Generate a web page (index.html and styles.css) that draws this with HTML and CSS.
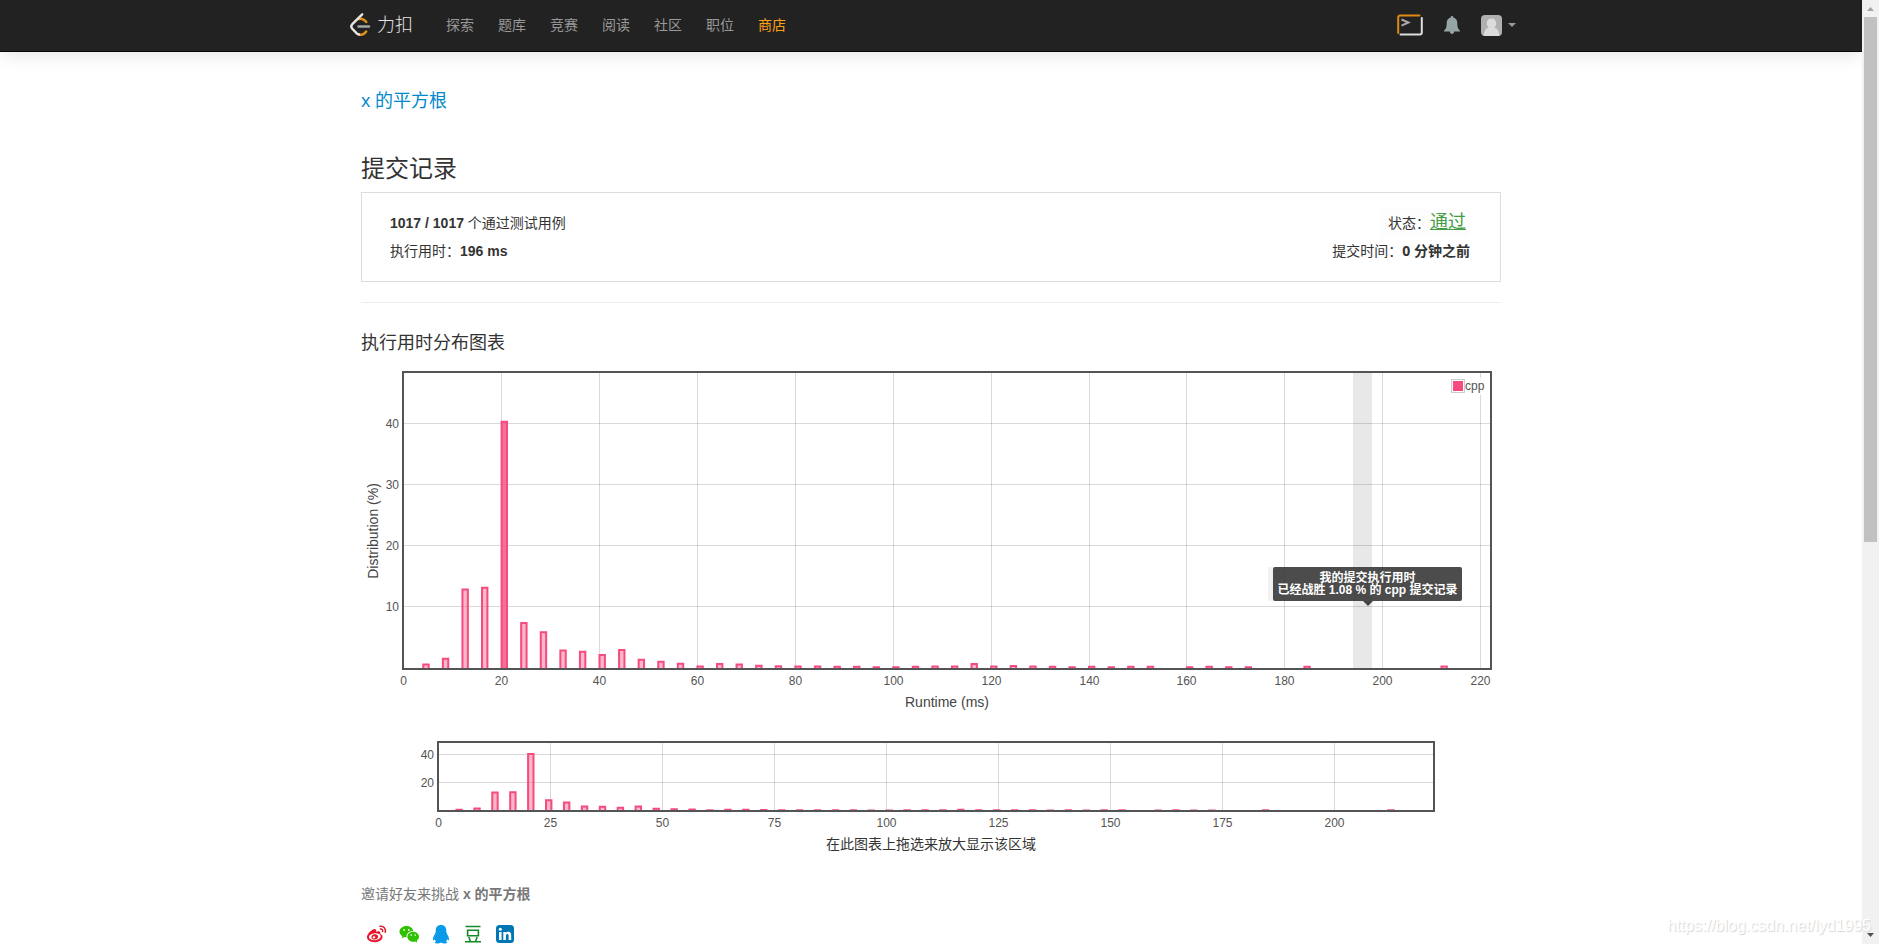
FILE: index.html
```html
<!DOCTYPE html>
<html lang="zh-CN">
<head>
<meta charset="utf-8">
<title>提交记录 - 力扣</title>
<link rel="stylesheet" href="styles.css">
</head>
<body>
<div class="page">
  <header class="navbar">
    <div class="container navbar-inner">
      <a class="brand" href="#">
        <svg width="21" height="24" viewBox="0 0 21 24" fill="none" stroke-width="2.4" stroke-linecap="round" stroke-linejoin="round" aria-hidden="true">
          <path d="M9 6c2.500-.8 5 .3 7.300 3M16.200 18.500c-1.500 2-4.500 4-7.200 2.800" stroke="#e08f18"/>
          <path d="M12.200 1.300 2.300 11.200c-1.300 1.500-1.300 3.200 0 4.600L7 20.700c.6.500 1.200.7 2 .8" stroke="#e9e5df"/>
          <path d="M8.500 13.500h10.500" stroke="#a5a5a5"/>
        </svg>
        <span>力扣</span>
      </a>
      <nav class="menu">
        <a href="#">探索</a><a href="#">题库</a><a href="#">竞赛</a><a href="#">阅读</a><a href="#">社区</a><a href="#">职位</a><a class="store" href="#">商店</a>
      </nav>
      <div class="tools">
        <button type="button" aria-label="Playground">
          <svg width="26" height="22" viewBox="0 0 26 22" fill="none" stroke-width="2" stroke-linecap="round">
            <path d="M1.200 19V3.500q0-2 2-2H22.500" stroke="#de8a12"/>
            <path d="M24.800 4v14.500q0 2-2 2H3.500" stroke="#dedede"/>
            <path d="M4.500 5.500l7 3-7 3.200" stroke="#a8a8a8" stroke-linecap="butt"/>
          </svg>
        </button>
        <button type="button" aria-label="通知">
          <svg width="16" height="20" viewBox="0 0 16 20" fill="#95a5a6">
            <path d="M8 1c.9 0 1.300.6 1.300 1.400 2.600.7 4 2.700 4 5.600 0 4.500.9 6.200 2.700 7.700v.8H10.300C10 17.900 9.200 19 8 19s-2-1.100-2.300-2.500H0v-.8C1.800 14.200 2.700 12.500 2.700 8c0-2.900 1.400-4.900 4-5.600C6.700 1.600 7.100 1 8 1z"/>
          </svg>
        </button>
        <button type="button" class="account" aria-label="账户">
          <svg width="21" height="21" viewBox="0 0 21 21">
            <rect width="21" height="21" rx="4" fill="#b0b0b0"/>
            <path d="M10.500 3.500c2.800 0 4.700 1.900 4.700 4.700 0 1.800-.8 3.300-2 4.200 3.200.9 5 3.700 5.100 8.600H2.700c.1-4.900 1.900-7.700 5.100-8.600-1.200-.9-2-2.400-2-4.200 0-2.800 1.900-4.700 4.700-4.700z" fill="#dcdcdc"/>
          </svg>
          <svg width="8" height="4" viewBox="0 0 8 4"><path d="M0 0h8L4 4z" fill="#999"/></svg>
        </button>
      </div>
    </div>
  </header>

  <main class="container content">
    <h1 class="problem"><a href="#">x 的平方根</a></h1>
    <h2 class="heading">提交记录</h2>
    <section class="summary">
      <div class="row">
        <span><b>1017 / 1017</b> 个通过测试用例</span>
        <span class="status">状态：<a class="accepted" href="#">通过</a></span>
      </div>
      <div class="row">
        <span>执行用时：<b>196 ms</b></span>
        <span>提交时间：<b class="time">0 分钟之前</b></span>
      </div>
    </section>
    <hr class="divider">
    <h3 class="subheading">执行用时分布图表</h3>
    <div class="chart">
      <svg id="distribution" viewBox="0 0 1140 365" role="img" aria-label="执行用时分布图表"></svg>
      <div class="tooltip">我的提交执行用时<br>已经战胜 1.08 % 的 cpp 提交记录</div>
    </div>
    <figure class="overview">
      <svg id="overview" viewBox="0 0 1140 112" role="img" aria-label="缩略图表"></svg>
      <figcaption>在此图表上拖选来放大显示该区域</figcaption>
    </figure>
    <p class="invite">邀请好友来挑战 <b>x 的平方根</b></p>
    <div class="share">
      <a href="#" aria-label="微博"><svg width="20" height="20" viewBox="0 0 20 20">
        <path fill="#e6162d" fill-rule="evenodd" d="M8.300 5.200c1.300.5 1 1.600.7 2.600 1.500-.6 3-.8 3.900-.1.700.6.600 1.300.2 2.300 1.500.4 2.500 1.300 2.500 2.700 0 3-3.700 5.500-8 5.500-4 0-7.600-1.900-7.600-5.200 0-2.500 2.600-5.500 5.200-7.100 1.200-.7 2.300-1 3.100-.7zM7.600 9.300c-3.300.3-5.800 2.100-5.600 4 .2 1.900 2.900 3.200 6.200 2.900s5.700-2.200 5.500-4.100c-.2-1.900-2.800-3.100-6.100-2.800z"/>
        <path fill="#e6162d" fill-rule="evenodd" d="M7.500 10.200c1.900-.3 3.600.7 3.700 2.300.1 1.500-1.300 2.900-3.300 3.100-1.900.2-3.400-.8-3.500-2.300-.1-1.500 1.200-2.900 3.100-3.100zm-.7 2c-.8.1-1.300.7-1.200 1.300.1.700.8 1 1.500.9.800-.1 1.300-.7 1.200-1.300-.1-.6-.8-1-1.500-.9z"/>
        <path fill="none" stroke="#e6162d" stroke-width="1.500" stroke-linecap="round" d="M13 2.200c3.600-.5 6.200 2.500 5.200 6M13.400 5c1.700-.2 2.600 1 2.200 2.500"/>
      </svg></a>
      <a href="#" aria-label="微信"><svg width="20" height="20" viewBox="0 0 20 20">
        <path fill="#2dc100" fill-rule="evenodd" d="M7.500 2c3.500 0 6.300 2.100 6.800 4.900-3.800-.1-6.800 2.400-6.800 5.500 0 .4 0 .7.100 1-.9 0-1.600-.1-2.400-.3l-2.500 1.300.7-2.200C1.700 11 .5 9.500.5 7.700.5 4.500 3.600 2 7.500 2zM5.100 5a.9.900 0 1 0 0 1.800.9.900 0 0 0 0-1.800zm4.700 0a.9.900 0 1 0 0 1.800.9.900 0 0 0 0-1.800z"/>
        <path fill="#2dc100" fill-rule="evenodd" d="M14.200 7.800c3.200 0 5.800 2.200 5.800 5 0 1.500-.9 2.900-2.200 3.800l.5 2-2.100-1.100c-.6.200-1.300.3-2 .3-3.200 0-5.800-2.200-5.800-5s2.600-5 5.800-5zM12.200 10.300a.8.800 0 1 0 0 1.600.8.800 0 0 0 0-1.600zm4 0a.8.800 0 1 0 0 1.600.8.800 0 0 0 0-1.600z"/>
      </svg></a>
      <a href="#" aria-label="QQ"><svg width="20" height="20" viewBox="0 0 20 20">
        <path fill="#0a9be8" d="M10 1c3.300 0 5.300 2.200 5.300 5.500v1.700c.4.500.7 1.200.6 1.900 1.300 1.700 2.300 3.700 2.100 5.600-.2 1-1 .7-1.800-.5-.2.900-.7 1.600-1.300 2.300.9.300 1.300.7 1.300 1.100 0 .7-1.300 1-2.800 1-1.300 0-2.300-.3-2.900-.8h-1c-.6.5-1.600.8-2.900.8-1.500 0-2.800-.3-2.800-1 0-.4.400-.8 1.300-1.100-.6-.7-1.100-1.400-1.300-2.300-.8 1.200-1.600 1.500-1.800.5-.2-1.900.8-3.900 2.100-5.600-.1-.7.200-1.400.6-1.900V6.500C4.700 3.200 6.700 1 10 1z"/>
      </svg></a>
      <a href="#" aria-label="豆瓣"><svg width="20" height="20" viewBox="0 0 20 20" fill="none" stroke="#128a28" stroke-width="1.600">
        <path d="M2.500 2.500h15M2 17.700h16M4.600 6.300h10.800v5.400H4.600zM5.800 13l1.700 4.500M14.200 13l-1.700 4.500"/>
      </svg></a>
      <a href="#" aria-label="LinkedIn"><svg width="20" height="20" viewBox="0 0 20 20">
        <rect x="1" y="1" width="18" height="18" rx="3.500" fill="#0077b5"/>
        <circle cx="5.300" cy="5.300" r="1.500" fill="#fff"/>
        <path fill="#fff" d="M4 8h2.600v8H4zM8.300 8h2.500v1.100c.5-.8 1.300-1.300 2.500-1.300 2.200 0 2.900 1.400 2.900 3.500V16h-2.600v-4.200c0-1.100-.3-1.800-1.200-1.800-1 0-1.500.7-1.500 1.800V16H8.300z"/>
      </svg></a>
    </div>
  </main>
</div>
<div class="scrollbar" aria-hidden="true">
  <svg width="17" height="17" viewBox="0 0 17 17"><path d="M5 11h7L8.500 7z" fill="#a3a3a3"/></svg>
  <div class="thumb"></div>
  <svg width="17" height="17" viewBox="0 0 17 17"><path d="M5 6h7L8.500 10z" fill="#505050"/></svg>
</div>
<div class="watermark">https://blog.csdn.net/lyd1995</div>
<script src="chart.js"></script>
</body>
</html>
```
FILE: styles.css
```css
* {
  box-sizing: border-box;
}

body {
  display: flex;
  position: relative;
  height: 100vh;
  margin: 0;
  overflow: hidden;
  background: #fff;
  color: #333;
  font: 14px/24px "Liberation Sans", "Noto Sans CJK SC", sans-serif;
}

a {
  color: #08c;
  text-decoration: none;
}

h1, h2, h3, p, figure {
  margin: 0;
  font-weight: 400;
}

svg {
  display: block;
}

button {
  padding: 0;
  border: 0;
  background: none;
}

.page {
  flex: 1;
  min-width: 0;
  overflow: hidden;
}

.container {
  max-width: 1170px;
  margin: 0 auto;
}

.navbar {
  height: 52px;
  border-bottom: 1px solid #080808;
  background: #222;
  box-shadow: 0 1px 20px rgba(0, 0, 0, 0.13);
}

.navbar-inner {
  display: flex;
  align-items: center;
  height: 50px;
  padding-left: 4px;
}

.brand {
  display: flex;
  align-items: center;
  gap: 6px;
  color: #e4e4e4;
  font-size: 18px;
  font-weight: 300;
}

.menu {
  display: flex;
  gap: 24px;
  margin-left: 33px;
}

.menu a {
  color: #999;
}

.menu .store {
  color: #ffa116;
}

.tools {
  display: flex;
  align-items: center;
  gap: 21px;
  margin-left: auto;
}

.account {
  display: flex;
  align-items: center;
  gap: 6px;
}

.content {
  padding: 36px 15px 0;
}

.problem {
  font-family: "Open Sans", "Noto Sans CJK SC", sans-serif;
  font-size: 18px;
}

.heading {
  margin-top: 41px;
  font-size: 24px;
  line-height: 32px;
}

.summary {
  margin-top: 7px;
  padding: 16px 30px 16px 28px;
  border: 1px solid #ddd;
}

.row {
  display: flex;
  justify-content: space-between;
  height: 28px;
  line-height: 28px;
}

.status {
  padding: 0 4px 0 8px;
  background: #fdfdfd;
}

.accepted {
  color: #449d44;
  font-size: 18px;
  line-height: 24px;
  text-decoration: underline;
}

.time {
  font-family: "Open Sans", "Noto Sans CJK SC", sans-serif;
}

.divider {
  height: 1px;
  margin: 20px 0 28px;
  border: 0;
  background: #eee;
}

.subheading {
  font-size: 18px;
}

.chart {
  position: relative;
}

.chart svg,
.overview svg {
  width: 100%;
  height: auto;
}

.frame {
  fill: none;
  stroke: #545454;
  stroke-width: 2;
}

.grid {
  stroke: rgba(84, 84, 84, 0.22);
}

.bar {
  fill: rgba(244, 76, 126, 0.4);
  stroke: #f44c7e;
  stroke-width: 2;
}

.bar-active {
  fill: rgba(244, 76, 126, 0.8);
}

.band {
  fill: #e8e8e8;
}

.tick {
  fill: #545454;
  font-size: 12px;
}

.axis-title {
  fill: #444;
  font-size: 14px;
}

.middle {
  text-anchor: middle;
}

.end {
  text-anchor: end;
}

.legend-back {
  fill: rgba(255, 255, 255, 0.85);
}

.legend-box {
  fill: #fff;
  stroke: #ccc;
}

.legend-color {
  fill: #f44c7e;
}

.tooltip {
  position: absolute;
  top: 58%;
  left: 80%;
  width: 189px;
  padding: 5px 0;
  border-radius: 2px;
  background: rgba(51, 51, 51, 0.88);
  box-shadow: -5px 0 0 #f1f1f1;
  color: #fff;
  font-size: 12px;
  font-weight: 700;
  line-height: 12px;
  text-align: center;
  white-space: nowrap;
}

.tooltip::after {
  content: "";
  position: absolute;
  top: 100%;
  left: 50%;
  margin-left: -5px;
  border: 5px solid transparent;
  border-top-color: #444;
  border-bottom: 0;
}

.overview figcaption {
  text-align: center;
}

.invite {
  margin-top: 26px;
  color: #777;
}

.share {
  display: flex;
  gap: 12px;
  margin-top: 18px;
  padding-left: 6px;
}

.scrollbar {
  display: flex;
  flex-direction: column;
  width: 17px;
  background: #f1f1f1;
}

.thumb {
  flex: 0 0 55.6%;
  margin: 0 2px auto;
  background: #c1c1c1;
}

.watermark {
  position: absolute;
  right: 8px;
  bottom: 6px;
  color: #fff;
  font-size: 16px;
  text-shadow: 1px 1px 1px #d4d4d4;
}
```
FILE: chart.js
```js
const runtimes = [
  [4, 0.5], [8, 1.45], [12, 12.8], [16, 13.1], [20, 40.3], [24, 7.3], [28, 5.8],
  [32, 2.8], [36, 2.6], [40, 2.05], [44, 2.9], [48, 1.3], [52, 0.95], [56, 0.65],
  [60, 0.17], [64, 0.6], [68, 0.5], [72, 0.3], [76, 0.22], [80, 0.17], [84, 0.17],
  [88, 0.15], [92, 0.15], [96, 0.05], [100, 0.05], [104, 0.15], [108, 0.2],
  [112, 0.17], [116, 0.6], [120, 0.17], [124, 0.25], [128, 0.17], [132, 0.12],
  [136, 0.05], [140, 0.12], [144, 0.05], [148, 0.15], [152, 0.12], [160, 0.05],
  [164, 0.15], [168, 0.05], [172, 0.05], [184, 0.15], [212, 0.17]
];

function add(parent, name, attrs, text) {
  const el = document.createElementNS("http://www.w3.org/2000/svg", name);
  for (const key in attrs) el.setAttribute(key, attrs[key]);
  if (text !== undefined) el.textContent = text;
  parent.appendChild(el);
}

function draw(svg, o) {
  const px = v => o.x0 + v * o.scaleX;
  const py = v => o.y0 - v * o.scaleY;
  const snap = v => Math.floor(v) + 0.5;
  const bottom = o.top + o.height;

  if (o.band) {
    add(svg, "rect", { class: "band", x: Math.round(px(o.band)), y: o.top, width: 19, height: o.height });
  }
  for (let v = 0; v <= o.maxX; v += o.stepX) {
    const x = snap(px(v));
    if (v) add(svg, "line", { class: "grid", x1: x, x2: x, y1: o.top, y2: bottom });
    add(svg, "text", { class: "tick middle", x: x, y: bottom + 16 }, v);
  }
  for (let v = o.stepY; v <= 40; v += o.stepY) {
    const y = snap(py(v));
    add(svg, "line", { class: "grid", x1: o.left, x2: o.left + o.width, y1: y, y2: y });
    add(svg, "text", { class: "tick end", x: o.left - 4, y: y + 4 }, v);
  }
  for (const [time, share] of runtimes) {
    const x = px(time), y = py(share);
    add(svg, "path", {
      class: time === o.active ? "bar bar-active" : "bar",
      d: `M${x} ${bottom}V${y}h5.4V${bottom}`
    });
  }
  add(svg, "rect", { class: "frame", x: o.left, y: o.top, width: o.width, height: o.height });
}

const main = document.getElementById("distribution");
draw(main, {
  left: 42, top: 17, width: 1088, height: 297,
  x0: 42.7, y0: 312.6, scaleX: 4.895, scaleY: 6.1,
  maxX: 220, stepX: 20, stepY: 10, active: 20, band: 193.9
});
add(main, "text", { class: "axis-title middle", x: 586, y: 352 }, "Runtime (ms)");
add(main, "text", { class: "axis-title middle", transform: "translate(17 176) rotate(-90)" }, "Distribution (%)");
add(main, "rect", { class: "legend-back", x: 1089, y: 23, width: 34, height: 17 });
add(main, "rect", { class: "legend-box", x: 1090.5, y: 24.5, width: 13, height: 13 });
add(main, "rect", { class: "legend-color", x: 1092, y: 26, width: 10, height: 10 });
add(main, "text", { class: "tick", x: 1104, y: 35 }, "cpp");

draw(document.getElementById("overview"), {
  left: 77, top: 22, width: 996, height: 69,
  x0: 77.5, y0: 90.5, scaleX: 4.48, scaleY: 1.4,
  maxX: 200, stepX: 25, stepY: 20
});
```
